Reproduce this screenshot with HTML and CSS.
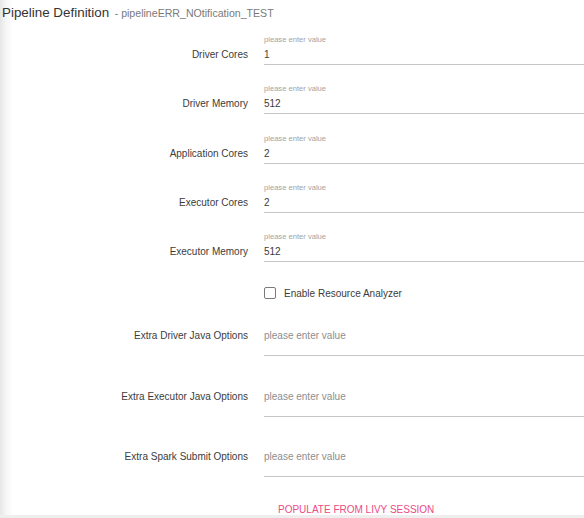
FILE: index.html
```html
<!DOCTYPE html>
<html>
<head>
<meta charset="utf-8">
<link rel="stylesheet" href="styles.css">
</head>
<body>
<div class="page">
  <div class="header">
    <span class="title">Pipeline Definition</span>
    <span class="subtitle">- pipelineERR_NOtification_TEST</span>
  </div>

  <div class="row">
    <div class="label">Driver Cores</div>
    <div class="field">
      <div class="caption">please enter value</div>
      <div class="input">1</div>
    </div>
  </div>
  <div class="row">
    <div class="label">Driver Memory</div>
    <div class="field">
      <div class="caption">please enter value</div>
      <div class="input">512</div>
    </div>
  </div>
  <div class="row">
    <div class="label">Application Cores</div>
    <div class="field">
      <div class="caption">please enter value</div>
      <div class="input">2</div>
    </div>
  </div>
  <div class="row">
    <div class="label">Executor Cores</div>
    <div class="field">
      <div class="caption">please enter value</div>
      <div class="input">2</div>
    </div>
  </div>
  <div class="row">
    <div class="label">Executor Memory</div>
    <div class="field">
      <div class="caption">please enter value</div>
      <div class="input">512</div>
    </div>
  </div>

  <div class="check-row">
    <span class="checkbox"></span>
    <span class="check-label">Enable Resource Analyzer</span>
  </div>

  <div class="row-extra">
    <div class="label-extra">Extra Driver Java Options</div>
    <div class="input-extra">please enter value</div>
  </div>
  <div class="row-extra">
    <div class="label-extra">Extra Executor Java Options</div>
    <div class="input-extra">please enter value</div>
  </div>
  <div class="row-extra">
    <div class="label-extra">Extra Spark Submit Options</div>
    <div class="input-extra">please enter value</div>
  </div>

  <div class="actions">
    <span class="btn">POPULATE FROM LIVY SESSION</span>
  </div>
</div>
</body>
</html>
```

FILE: styles.css
```css
html, body {
  margin: 0;
  padding: 0;
}
body {
  background: #eeeeee;
  font-family: "Liberation Sans", Arial, sans-serif;
  width: 584px;
  height: 518px;
  overflow: hidden;
}
.page {
  height: 515px;
  background: linear-gradient(to right, #e6e6e6 0px, #f6f6f6 6px, #ffffff 13px);
  overflow: hidden;
}
.header {
  height: 35px;
  box-sizing: border-box;
  padding: 4px 0 0 2px;
  line-height: 16px;
  white-space: nowrap;
}
.title {
  font-size: 13.4px;
  color: #333333;
}
.subtitle {
  font-size: 10.6px;
  color: #7a7a7a;
  margin-left: 1px;
}
.row {
  display: flex;
  height: 30px;
  margin-bottom: 19.3px;
}
.label {
  width: 248px;
  flex: none;
  text-align: right;
  font-size: 10px;
  color: #3c3c3c;
  box-sizing: border-box;
  padding-top: 12px;
  line-height: 16px;
}
.field {
  margin-left: 16px;
  flex: 1;
}
.caption {
  height: 10px;
  line-height: 10px;
  font-size: 7.6px;
  color: #a3a3a3;
}
.input {
  padding-top: 2px;
  height: 17px;
  line-height: 16px;
  font-size: 10px;
  color: #3c3c3c;
  border-bottom: 1px solid #c6c6c6;
}
.check-row {
  display: flex;
  align-items: center;
  height: 20px;
  margin-top: 21px;
  padding-left: 264px;
}
.checkbox {
  width: 10px;
  height: 10px;
  border: 1.5px solid #7a7a7a;
  border-radius: 2px;
  flex: none;
}
.check-label {
  margin-left: 8px;
  font-size: 10px;
  color: #3c3c3c;
}
.row-extra {
  display: flex;
  margin-top: 22px;
}
.row-extra + .row-extra {
  margin-top: 29.5px;
}
.label-extra {
  width: 248px;
  flex: none;
  text-align: right;
  font-size: 10px;
  color: #3c3c3c;
  line-height: 20px;
  padding-top: 1px;
}
.input-extra {
  margin-left: 16px;
  flex: 1;
  line-height: 20px;
  height: 20px;
  padding-top: 1px;
  padding-bottom: 9px;
  font-size: 10px;
  color: #8e8e8e;
  border-bottom: 1px solid #c6c6c6;
}
.actions {
  margin-top: 22px;
  padding-left: 264px;
}
.btn {
  display: inline-block;
  padding: 0 14px;
  font-size: 10px;
  line-height: 16px;
  color: #ee4a84;
}
```
